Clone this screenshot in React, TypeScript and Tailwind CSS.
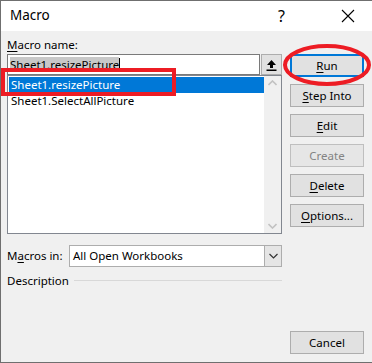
import React from 'react'

const font = { fontFamily: '"Noto Sans", "Open Sans", sans-serif' }

const DialogButton: React.FC<{
  label: string
  accessKey?: number
  disabled?: boolean
  isDefault?: boolean
}> = ({ label, accessKey, disabled, isDefault }) => {
  const before = accessKey !== undefined ? label.slice(0, accessKey) : label
  const key = accessKey !== undefined ? label.charAt(accessKey) : ''
  const after = accessKey !== undefined ? label.slice(accessKey + 1) : ''
  return (
    <div
      className={[
        'h-[23px] w-[74px] flex items-center justify-center text-[11.5px] bg-[#e1e1e1]',
        isDefault ? 'border-2 border-[#0078d7]' : 'border border-[#adadad]',
        disabled ? 'text-[#838383] border-[#bfbfbf] bg-[#e6e6e6]' : 'text-black',
      ]
        .filter(Boolean)
        .join(' ')}
    >
      <span>
        {before}
        {key && <span className="underline underline-offset-2">{key}</span>}
        {after}
      </span>
    </div>
  )
}

export default function App() {
  return (
    <div
      className="relative w-[372px] h-[363px] bg-[#f0f0f0] border-l border-b border-t border-[#6f6f6f] flex flex-col overflow-hidden"
      style={font}
    >
      {/* title bar */}
      <div className="h-[30px] bg-white flex items-center shrink-0">
        <span className="ml-[9px] text-[13.5px] text-black leading-none">Macro</span>
        <span className="ml-auto mr-[56px] text-[16px] leading-none text-black">?</span>
        <svg width="14" height="14" viewBox="0 0 14 14" className="mr-[17px]">
          <path d="M1 1 L13 13 M13 1 L1 13" stroke="#000" strokeWidth="1.1" />
        </svg>
      </div>

      <div className="flex flex-1">
        {/* left column */}
        <div className="ml-[6px] w-[275px] flex flex-col">
          <div className="mt-[5px] h-[17px] text-[11.5px] leading-[17px] text-black">
            <span className="underline underline-offset-2">M</span>acro name:
          </div>
          <div className="flex h-[21px] mt-[1px]">
            <div className="flex-1 bg-white border border-[#7a7a7a] flex items-center pl-[2px]">
              <span className="bg-[#c8c8c8] text-[11.5px] leading-[15px] text-black">Sheet1.resizePicture</span>
              <span className="w-px h-[14px] bg-black" />
            </div>
            <div className="w-[21px] ml-[1px] bg-[#e1e1e1] border border-[#adadad] flex items-center justify-center">
              <svg width="11" height="12" viewBox="0 0 11 12">
                <path d="M5.5 1 L10 6 L7 6 L7 9 L4 9 L4 6 L1 6 Z" fill="#000" />
                <rect x="0.5" y="10.5" width="10" height="1.5" fill="#000" />
              </svg>
            </div>
          </div>
          <div className="h-[159px] bg-white border border-[#828790] flex">
            <div className="flex-1 flex flex-col pt-[1px] pl-[1px]">
              <div className="h-[16px] bg-[#0078d7] text-white text-[11.5px] leading-[16px] pl-[2px]">
                Sheet1.resizePicture
              </div>
              <div className="h-[16px] text-black text-[11.5px] leading-[16px] pl-[2px]">
                Sheet1.SelectAllPicture
              </div>
            </div>
            <div className="w-[17px] bg-[#f0f0f0] flex flex-col items-center justify-between py-[4px]">
              <svg width="9" height="6" viewBox="0 0 9 6">
                <path d="M0.5 5 L4.5 1 L8.5 5" stroke="#c2c2c2" strokeWidth="1.6" fill="none" />
              </svg>
              <svg width="9" height="6" viewBox="0 0 9 6">
                <path d="M0.5 1 L4.5 5 L8.5 1" stroke="#c2c2c2" strokeWidth="1.6" fill="none" />
              </svg>
            </div>
          </div>
          <div className="flex items-center mt-[11px] h-[22px]">
            <span className="w-[62px] text-[11.5px] text-black">
              M<span className="underline underline-offset-2">a</span>cros in:
            </span>
            <div className="flex-1 h-[22px] bg-white border border-[#adadad] flex">
              <span className="flex-1 text-[11.5px] leading-[20px] pl-[3px] text-black">All Open Workbooks</span>
              <div className="w-[17px] bg-[#e5e5e5] border-l border-[#adadad] flex items-center justify-center">
                <svg width="9" height="6" viewBox="0 0 9 6">
                  <path d="M0.5 1 L4.5 5 L8.5 1" stroke="#333" strokeWidth="1.2" fill="none" />
                </svg>
              </div>
            </div>
          </div>
          <div className="flex items-center mt-[5px]">
            <span className="text-[11.5px] text-black">Description</span>
            <div className="flex-1 h-px bg-[#d8d8d8] ml-[5px]" />
          </div>
        </div>

        {/* right column */}
        <div className="ml-[8px] flex flex-col">
          <div className="mt-[23px] flex flex-col gap-[7px]">
            <DialogButton label="Run" accessKey={0} isDefault />
            <DialogButton label="Step Into" accessKey={0} />
            <DialogButton label="Edit" accessKey={0} />
            <DialogButton label="Create" disabled />
            <DialogButton label="Delete" accessKey={0} />
            <DialogButton label="Options..." accessKey={0} />
          </div>
          <div className="mt-auto mb-[8px]">
            <DialogButton label="Cancel" />
          </div>
        </div>
      </div>

      {/* red annotations */}
      <div className="absolute left-[0px] top-[67px] w-[175px] h-[28px] border-[4px] border-[#ed1c24]" />
      <svg className="absolute left-[280px] top-[40px]" width="92" height="48" viewBox="0 0 92 48">
        <ellipse cx="46" cy="24" rx="42" ry="19" stroke="#ed1c24" strokeWidth="4" fill="none" />
      </svg>
    </div>
  )
}
